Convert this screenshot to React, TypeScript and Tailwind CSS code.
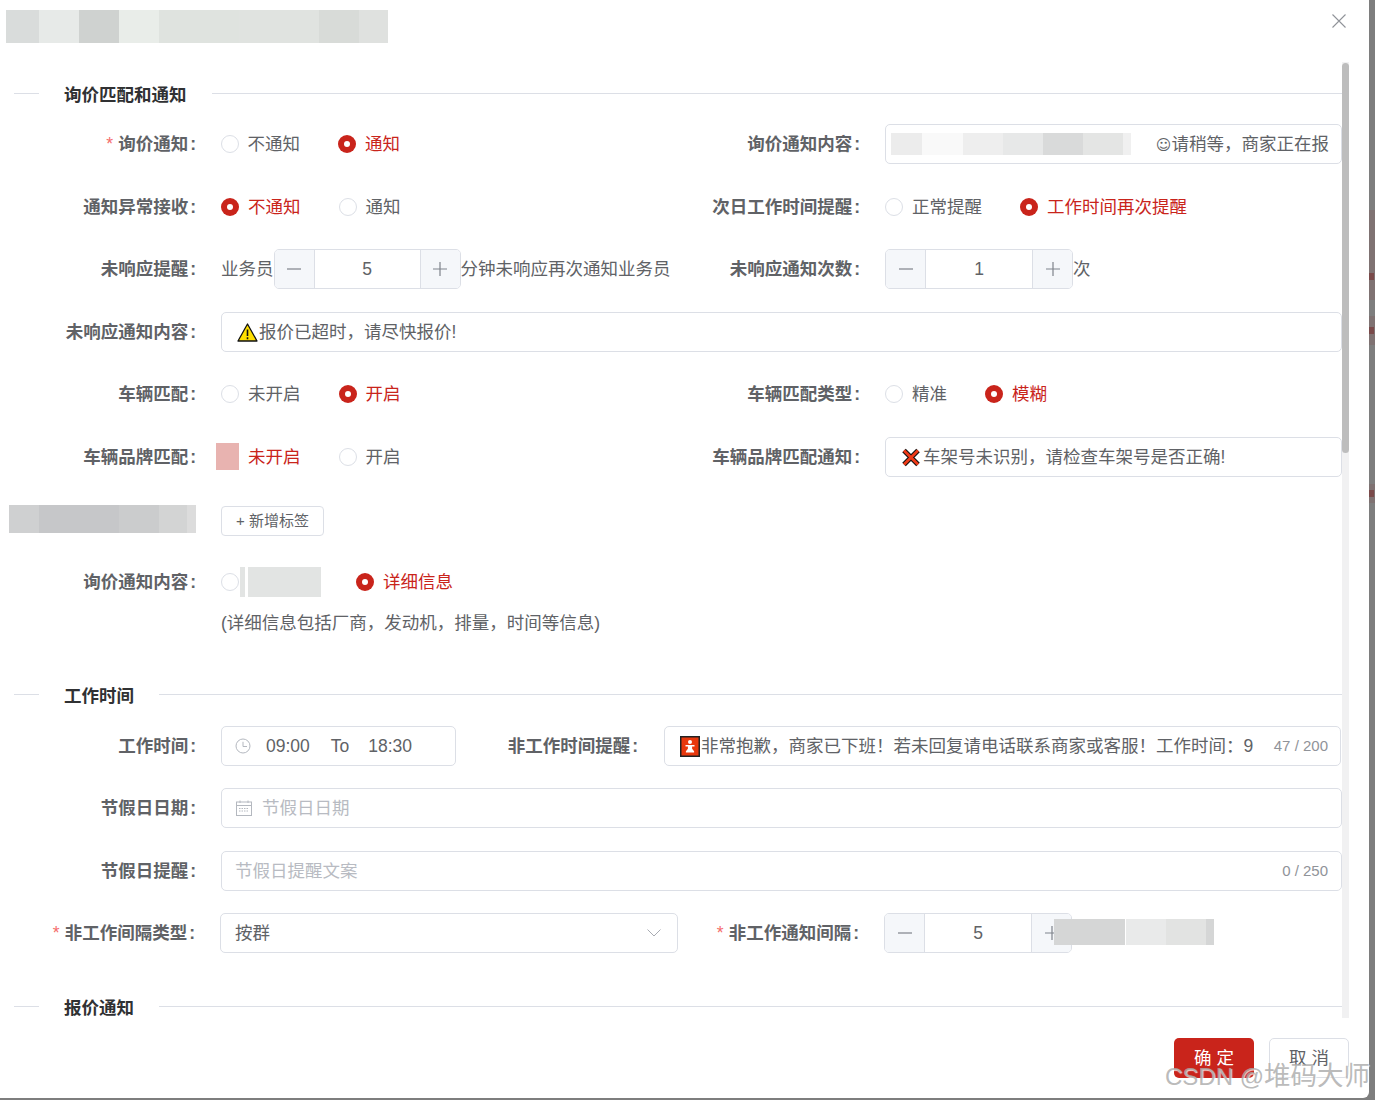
import type { ReactNode } from 'react';

const RED = 'text-[#c9241b]';

// blurred-out bits of the screenshot
function Mosaic({ segs, className = '' }: { segs: string[]; className?: string }) {
    return (
        <div className={'flex ' + className}>
            {segs.map((s, i) => (
                <div key={i} className={'h-full ' + s} />
            ))}
        </div>
    );
}

function Section({ title, className = '' }: { title: string; className?: string }) {
    return (
        <div className={'flex h-6 pl-[14px] ' + className}>
            <div className="mt-[10px] h-px w-[25px] bg-[#dcdfe6]" />
            <div className="mx-[25px] text-[17.5px] leading-6 font-bold text-[#303133]">{title}</div>
            <div className="mt-[10px] h-px flex-1 bg-[#dcdfe6]" />
        </div>
    );
}

function Label({ text, required, className = '' }: { text: string; required?: boolean; className?: string }) {
    return (
        <div className={'flex h-10 shrink-0 items-center justify-end text-[17.5px] font-bold text-[#606266] ' + className}>
            {required && <span className="mr-[5px] font-normal text-[#f56c6c]">*</span>}
            {text}
            <span className="ml-[2px]">:</span>
        </div>
    );
}

function Radio({ text, checked, className = '' }: { text?: string; checked?: boolean; className?: string }) {
    return (
        <div className={'flex items-center text-[17.5px] ' + className}>
            {checked ? (
                <div className="flex h-[18px] w-[18px] items-center justify-center rounded-full bg-[#c9241b]">
                    <div className="h-[6px] w-[6px] rounded-full bg-white" />
                </div>
            ) : (
                <div className="h-[18px] w-[18px] rounded-full border border-[#dcdfe6] bg-white" />
            )}
            {text && <span className={'ml-[9px] ' + (checked ? RED : 'text-[#606266]')}>{text}</span>}
        </div>
    );
}

function MinusIcon() {
    return (
        <svg width="16" height="16" viewBox="0 0 16 16" className="text-[#7f838b]">
            <path d="M1 8h14" stroke="currentColor" strokeWidth="1.2" />
        </svg>
    );
}

function PlusIcon() {
    return (
        <svg width="16" height="16" viewBox="0 0 16 16" className="text-[#7f838b]">
            <path d="M1 8h14M8 1v14" stroke="currentColor" strokeWidth="1.2" />
        </svg>
    );
}

function Stepper({ value, className = '' }: { value: string; className?: string }) {
    return (
        <div className={'flex h-10 shrink-0 rounded-[5px] border border-[#dcdfe6] text-[17.5px] text-[#606266] ' + className}>
            <div className="flex w-[40px] items-center justify-center rounded-l-[4px] border-r border-[#dcdfe6] bg-[#f5f7fa]">
                <MinusIcon />
            </div>
            <div className="flex flex-1 items-center justify-center">{value}</div>
            <div className="flex w-[40px] items-center justify-center rounded-r-[4px] border-l border-[#dcdfe6] bg-[#f5f7fa]">
                <PlusIcon />
            </div>
        </div>
    );
}

function Input({ children, className = '' }: { children: ReactNode; className?: string }) {
    return (
        <div className={'flex h-10 items-center overflow-hidden rounded-[5px] border border-[#dcdfe6] bg-white text-[17.5px] whitespace-nowrap text-[#606266] ' + className}>
            {children}
        </div>
    );
}

function WarnIcon() {
    return (
        <svg width="21" height="19" viewBox="0 0 21 19" className="shrink-0">
            <path d="M10.5 1 L20 18 H1 Z" fill="#ffdf00" stroke="#111" strokeWidth="1.3" strokeLinejoin="round" />
            <path d="M10.5 6.5v6.5M10.5 14.2v2" stroke="#111" strokeWidth="1.6" />
        </svg>
    );
}

function CrossIcon() {
    return (
        <svg width="20" height="19" viewBox="0 0 20 19" className="shrink-0">
            <path d="M3 2.5 L17 16.5 M17 2.5 L3 16.5" stroke="#111" strokeWidth="5" />
            <path d="M3 2.5 L17 16.5 M17 2.5 L3 16.5" stroke="#f03a17" strokeWidth="2.8" />
        </svg>
    );
}

function BabyIcon() {
    return (
        <svg width="20" height="21" viewBox="0 0 20 21" className="shrink-0">
            <rect x="0.75" y="0.75" width="18.5" height="19.5" fill="#e8380d" stroke="#222" strokeWidth="1.5" />
            <circle cx="10" cy="6" r="2" fill="#fff" />
            <path d="M5.5 9h9v1.6h-2.4v2.2l2 2.4v1.3h-8.2v-1.3l2-2.4v-2.2h-2.4z" fill="#fff" />
        </svg>
    );
}

function ClockIcon() {
    return (
        <svg width="16" height="16" viewBox="0 0 16 16" className="shrink-0 text-[#b4b8bf]" fill="none" stroke="currentColor">
            <circle cx="8" cy="8" r="7" />
            <path d="M8 3.8V8.5H12" />
        </svg>
    );
}

function CalendarIcon() {
    return (
        <svg width="16" height="16" viewBox="0 0 16 16" className="shrink-0 text-[#b4b8bf]" fill="none" stroke="currentColor">
            <rect x="0.5" y="2" width="15" height="13.5" />
            <path d="M0.5 5.5h15M4 0.5V3M12 0.5V3" />
            <path d="M3 8.5h10M3 11h10" strokeDasharray="1.5 1" />
        </svg>
    );
}

export default function App() {
    return (
        <div className="relative flex h-[1100px] w-[1375px] overflow-hidden bg-[#7e7e7e] [font-family:'Liberation_Sans','Noto_Sans_CJK_SC',sans-serif]">
            <div className="flex h-[1098px] w-[1369px] shrink-0 flex-col rounded-br-md bg-white">
                {/* Header */}
                <div className="flex h-[62px] shrink-0 items-start justify-between">
                    <Mosaic
                        className="mt-[10px] ml-[6px] h-[33px]"
                        segs={[
                            'w-[33px] bg-[#d9dcdb]',
                            'w-[40px] bg-[#e7eae8]',
                            'w-[40px] bg-[#cfd2d0]',
                            'w-[40px] bg-[#e9ede9]',
                            'w-[80px] bg-[#dfe3df]',
                            'w-[80px] bg-[#e0e3e0]',
                            'w-[40px] bg-[#d8dbd8]',
                            'w-[29px] bg-[#dfe1df]',
                        ]}
                    />
                    <svg width="14" height="14" viewBox="0 0 14 14" className="mt-[14px] mr-[23px] text-[#909399]">
                        <path d="M0.5 0.5l13 13M13.5 0.5l-13 13" stroke="currentColor" strokeWidth="1.1" />
                    </svg>
                </div>

                {/* Body */}
                <div className="flex h-[956px] shrink-0">
                    <div className="w-[1342px] shrink-0 overflow-hidden">
                        <Section title="询价匹配和通知" className="mt-[21px]" />

                        <div className="mt-[17px] flex">
                            <div className="flex w-[671px]">
                                <Label text="询价通知" required className="w-[196px]" />
                                <div className="ml-[24.5px] flex items-center">
                                    <Radio text="不通知" />
                                    <Radio text="通知" checked className="ml-[38px]" />
                                </div>
                            </div>
                            <Label text="询价通知内容" className="w-[189px]" />
                            <Input className="ml-[25px] w-[457px] pr-[12px] pl-[5px]">
                                <Mosaic
                                    className="h-[22px]"
                                    segs={[
                                        'w-[31px] bg-[#ececec]',
                                        'w-[41px] bg-[#f9f9f9]',
                                        'w-[40px] bg-[#eeeeee]',
                                        'w-[40px] bg-[#e7e8e8]',
                                        'w-[40px] bg-[#d9dada]',
                                        'w-[40px] bg-[#e4e5e4]',
                                        'w-[8px] bg-[#f0f0f0]',
                                    ]}
                                />
                                <span className="ml-auto">
                                    <span className="text-[15px] [font-family:'DejaVu_Sans',sans-serif]">☺</span>
                                    请稍等，商家正在报
                                </span>
                            </Input>
                        </div>

                        <div className="mt-[23px] flex">
                            <div className="flex w-[671px]">
                                <Label text="通知异常接收" className="w-[196px]" />
                                <div className="ml-[25px] flex items-center">
                                    <Radio text="不通知" checked />
                                    <Radio text="通知" className="ml-[38px]" />
                                </div>
                            </div>
                            <Label text="次日工作时间提醒" className="w-[189px]" />
                            <div className="ml-[25px] flex items-center">
                                <Radio text="正常提醒" />
                                <Radio text="工作时间再次提醒" checked className="ml-[38px]" />
                            </div>
                        </div>

                        <div className="mt-[22px] flex">
                            <div className="flex w-[671px]">
                                <Label text="未响应提醒" className="w-[196px]" />
                                <div className="ml-[25px] flex items-center text-[17.5px] whitespace-nowrap text-[#606266]">
                                    业务员
                                    <Stepper value="5" className="w-[187px]" />
                                    分钟未响应再次通知业务员
                                </div>
                            </div>
                            <Label text="未响应通知次数" className="w-[189px]" />
                            <div className="ml-[25px] flex items-center text-[17.5px] text-[#606266]">
                                <Stepper value="1" className="w-[188px]" />次
                            </div>
                        </div>

                        <div className="mt-[23px] flex">
                            <Label text="未响应通知内容" className="w-[196px]" />
                            <Input className="ml-[25px] flex-1 pl-[15px]">
                                <WarnIcon />
                                <span className="ml-px">报价已超时，请尽快报价!</span>
                            </Input>
                        </div>

                        <div className="mt-[22px] flex">
                            <div className="flex w-[671px]">
                                <Label text="车辆匹配" className="w-[196px]" />
                                <div className="ml-[25px] flex items-center">
                                    <Radio text="未开启" />
                                    <Radio text="开启" checked className="ml-[38px]" />
                                </div>
                            </div>
                            <Label text="车辆匹配类型" className="w-[189px]" />
                            <div className="ml-[25px] flex items-center">
                                <Radio text="精准" />
                                <Radio text="模糊" checked className="ml-[38px]" />
                            </div>
                        </div>

                        <div className="mt-[23px] flex">
                            <div className="flex w-[671px]">
                                <Label text="车辆品牌匹配" className="w-[196px]" />
                                <div className="relative ml-[25px] flex items-center">
                                    <Radio text="未开启" checked />
                                    <Radio text="开启" className="ml-[38px]" />
                                    <div className="absolute top-[6px] -left-[5px] h-[27px] w-[23px] bg-[#e8b3b0]" />
                                </div>
                            </div>
                            <Label text="车辆品牌匹配通知" className="w-[189px]" />
                            <Input className="ml-[25px] w-[457px] pl-[15px]">
                                <CrossIcon />
                                <span className="ml-[2px]">车架号未识别，请检查车架号是否正确!</span>
                            </Input>
                        </div>

                        <div className="mt-[24px] flex h-10">
                            <Mosaic
                                className="mt-1 ml-[9px] h-[28px] w-[187px]"
                                segs={[
                                    'w-[30px] bg-[#cfd0d1]',
                                    'w-[80px] bg-[#c6c7c9]',
                                    'w-[40px] bg-[#cbcccd]',
                                    'w-[28px] bg-[#d3d4d4]',
                                    'w-[9px] bg-[#dcdcdc]',
                                ]}
                            />
                            <button className="mt-[5px] ml-[25px] h-[30px] w-[103px] rounded-[4px] border border-[#dcdfe6] bg-white text-[15px] text-[#606266]">
                                + 新增标签
                            </button>
                        </div>

                        <div className="mt-[21px] flex">
                            <Label text="询价通知内容" className="w-[196px]" />
                            <div className="ml-[25px] flex items-center">
                                <Radio />
                                <div className="ml-px h-[30px] w-[5px] bg-[#e2e4e3]" />
                                <div className="ml-[3px] h-[30px] w-[73px] bg-[#e2e4e3]" />
                                <Radio text="详细信息" checked className="ml-[35px]" />
                            </div>
                        </div>

                        <div className="mt-px ml-[221px] flex h-10 items-center text-[17.5px] text-[#606266]">
                            (详细信息包括厂商，发动机，排量，时间等信息)
                        </div>

                        <Section title="工作时间" className="mt-[41px]" />

                        <div className="mt-[18px] flex">
                            <Label text="工作时间" className="w-[196px]" />
                            <Input className="ml-[25px] w-[235px] pl-[13px]">
                                <ClockIcon />
                                <span className="ml-[15px]">09:00</span>
                                <span className="ml-[21px]">To</span>
                                <span className="ml-[19px]">18:30</span>
                            </Input>
                            <Label text="非工作时间提醒" className="w-[182px]" />
                            <Input className="ml-[26px] w-[677px] pr-[12px] pl-[15px]">
                                <BabyIcon />
                                <span className="ml-px flex-1 overflow-hidden">非常抱歉，商家已下班！若未回复请电话联系商家或客服！工作时间：9</span>
                                <span className="ml-[20px] text-[15px] text-[#909399]">47 / 200</span>
                            </Input>
                        </div>

                        <div className="mt-[22px] flex">
                            <Label text="节假日日期" className="w-[196px]" />
                            <Input className="ml-[25px] flex-1 pl-[14px] text-[#b8bbc2]">
                                <CalendarIcon />
                                <span className="ml-[10px]">节假日日期</span>
                            </Input>
                        </div>

                        <div className="mt-[23px] flex">
                            <Label text="节假日提醒" className="w-[196px]" />
                            <Input className="ml-[25px] flex-1 pr-[13px] pl-[13px] text-[#b8bbc2]">
                                <span>节假日提醒文案</span>
                                <span className="ml-auto text-[15px] text-[#909399]">0 / 250</span>
                            </Input>
                        </div>

                        <div className="mt-[22px] flex">
                            <Label text="非工作间隔类型" required className="w-[195px]" />
                            <Input className="ml-[25px] w-[458px] pr-[16px] pl-[14px]">
                                <span>按群</span>
                                <svg width="14" height="8" viewBox="0 0 14 8" className="ml-auto text-[#a8abb2]">
                                    <path d="M0.5 0.5l6.5 6.5 6.5-6.5" fill="none" stroke="currentColor" />
                                </svg>
                            </Input>
                            <Label text="非工作通知间隔" required className="w-[181px]" />
                            <div className="relative ml-[25px]">
                                <Stepper value="5" className="w-[188px]" />
                                <Mosaic
                                    className="absolute top-[6px] left-[170px] h-[26px]"
                                    segs={[
                                        'w-[71px] bg-[#d5d6d6]',
                                        'w-px bg-white',
                                        'w-[40px] bg-[#e9eaea]',
                                        'w-[40px] bg-[#e2e3e2]',
                                        'w-[8px] bg-[#d5d6d6]',
                                    ]}
                                />
                            </div>
                        </div>

                        <Section title="报价通知" className="mt-[43px]" />
                    </div>

                    {/* Scrollbar */}
                    <div className="h-full w-[7px] shrink-0 bg-[#f1f1f2]">
                        <div className="mt-px h-[390px] rounded-[4px] bg-[#bdbdbd]" />
                    </div>
                </div>

                {/* Footer */}
                <div className="flex flex-1 items-start justify-end gap-[15px] pt-[20px] pr-[20px]">
                    <button className="h-10 w-20 rounded-[5px] bg-[#c9241b] pl-[5px] text-[17.5px] tracking-[5px] text-white">确定</button>
                    <button className="h-10 w-20 rounded-[5px] border border-[#dcdfe6] bg-white pl-[5px] text-[17.5px] tracking-[5px] text-[#606266]">取消</button>
                </div>
            </div>

            {/* What shows of the page behind the dialog */}
            <div className="flex w-[6px] shrink-0 flex-col">
                <div className="mt-[210px] h-[90px] w-full bg-[#7f7272] pt-[63px]">
                    <div className="h-[7px] w-[5px] bg-[#7a4a4a]" />
                </div>
                <div className="mt-[16px] h-[29px] w-full bg-[#7f7272] pt-[11px]">
                    <div className="h-[7px] w-[5px] bg-[#7a4a4a]" />
                </div>
                <div className="mt-[139px] h-[19px] w-full bg-[#7f7272] pt-[6px]">
                    <div className="h-[7px] w-[5px] bg-[#7a4a4a]" />
                </div>
            </div>

            {/* Watermark */}
            <div className="absolute top-[1058px] left-[1165px] flex items-baseline leading-9 whitespace-nowrap text-[#a9a9a9]/80 [text-shadow:1px_1px_1px_#ffffffcc]">
                <span className="text-[24px] whitespace-pre">CSDN @</span>
                <span className="text-[26.5px]">堆码大师</span>
            </div>
        </div>
    );
}
